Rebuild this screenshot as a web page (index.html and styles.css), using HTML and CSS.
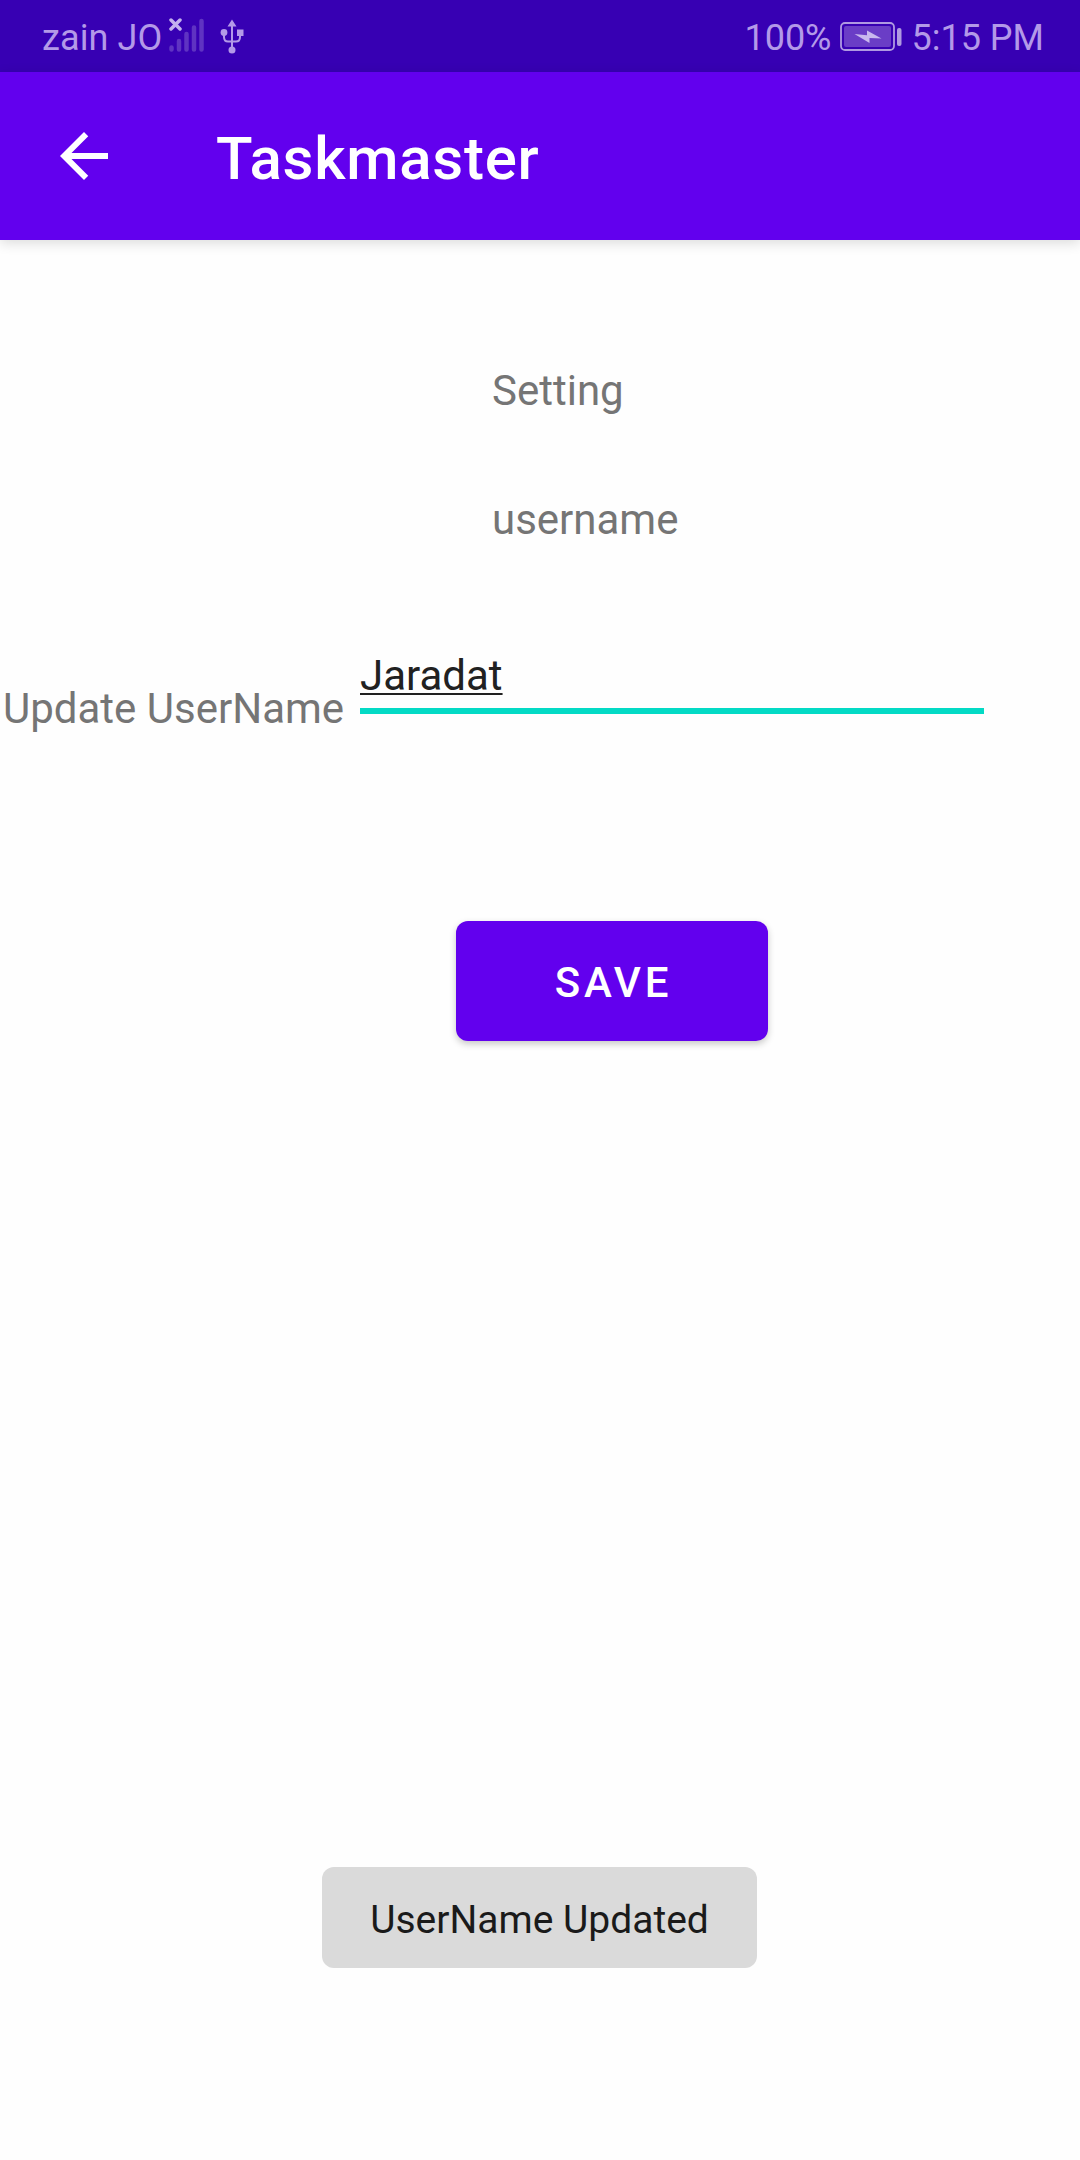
FILE: index.html
```
<!DOCTYPE html>
<html lang="en">
<head>
<meta charset="utf-8">
<title>Taskmaster</title>
<link rel="stylesheet" href="styles.css">
</head>
<body>
<header class="status-bar">
  <div class="status-group">
    <span class="carrier">zain JO</span>
    <svg class="signal" width="36" height="36" viewBox="0 0 36 36">
      <path class="signal-bars" d="M3.500 29.500v2M11 23v8.500M18.500 16v15.500M26 9.500v22M33.500 3v28.500"/>
      <path class="signal-x" d="M3 2l9 9M12 2l-9 9"/>
    </svg>
    <svg class="usb" width="24" height="36" viewBox="0 0 24 36">
      <path class="usb-line" d="M12 6v25M4 13v5q0 4.500 4 4.500h8q4 0 4-4.500v-5"/>
      <path class="usb-shape" d="M12 0.500l4.500 7h-9zM17 10.500h6.500v6.500h-6.500z"/>
      <circle class="usb-shape" cx="4" cy="13.500" r="3.400"/>
      <circle class="usb-shape" cx="12" cy="31" r="3.500"/>
    </svg>
  </div>
  <div class="status-group">
    <span class="percent">100%</span>
    <svg class="battery" width="62" height="30" viewBox="0 0 62 30">
      <rect class="battery-case" x="1" y="1" width="53" height="27" rx="4"/>
      <rect class="battery-fill" x="4" y="4" width="47" height="21" rx="2"/>
      <rect class="battery-cap" x="57" y="6" width="4.500" height="18" rx="2"/>
      <path class="battery-bolt" d="M14.500 12l12.500 1.200V8.500L41.500 16.500 29.500 16v5z"/>
    </svg>
    <span class="clock">5:15 PM</span>
  </div>
</header>
<nav class="app-bar">
  <svg class="back" width="72" height="72" viewBox="0 0 24 24"><path d="M20 11H7.830l5.590-5.590L12 4l-8 8 8 8 1.410-1.410L7.830 13H20z"/></svg>
  <h1 class="title">Taskmaster</h1>
</nav>
<main class="content">
  <div class="label heading">Setting</div>
  <div class="label username">username</div>
  <div class="field-row">
    <div class="label field-label">Update UserName</div>
    <div class="field"><span class="field-value">Jaradat</span></div>
  </div>
  <button class="save">Save</button>
  <div class="toast">UserName Updated</div>
</main>
</body>
</html>
```
FILE: styles.css
```
body {
  margin: 0;
  background: #fefefe;
  font-family: Roboto, sans-serif;
  font-size: 42px;
  line-height: 56px;
}

.status-bar {
  display: flex;
  justify-content: space-between;
  box-sizing: border-box;
  height: 72px;
  padding: 2px 36px 0 42px;
  background: #3700b3;
  color: #b399e8;
  font-size: 36px;
  line-height: 72px;
}

.status-group {
  display: flex;
  align-items: flex-start;
  white-space: nowrap;
}

.carrier {
  width: 125px;
  letter-spacing: 0.1px;
}

.signal {
  margin-top: 16px;
  margin-right: 16px;
  margin-left: 1px;
  fill: none;
  stroke-linecap: round;
}

.signal-bars {
  stroke: #5f33c2;
  stroke-width: 4.500;
}

.signal-x {
  stroke: #c3b0ee;
  stroke-width: 3.500;
}

.usb {
  margin-top: 17px;
}

.usb-line {
  fill: none;
  stroke: #b399e8;
  stroke-width: 2;
}

.usb-shape {
  fill: #b399e8;
}

.battery {
  margin: 20px 10px 0 8px;
}

.battery-case {
  fill: none;
  stroke: #af99e1;
  stroke-width: 1.800;
}

.battery-fill {
  fill: #6a3dc6;
}

.battery-cap {
  fill: #af99e1;
}

.battery-bolt {
  fill: #c9b8ee;
}

.app-bar {
  display: flex;
  align-items: center;
  position: relative;
  box-sizing: border-box;
  height: 168px;
  padding-left: 48px;
  background: #6200ee;
  color: #fff;
  box-shadow: 0 3px 12px rgba(0, 0, 0, 0.14);
}

.back {
  fill: #fff;
}

.title {
  margin: 0 0 0 96px;
  padding-top: 6px;
  font-size: 60px;
  font-weight: 500;
  line-height: 80px;
  letter-spacing: 0.0125em;
}

.content {
  display: flex;
  flex-direction: column;
  height: 1920px;
}

.label {
  color: #757575;
  white-space: nowrap;
}

.heading {
  margin: 123px 0 0 492px;
}

.username {
  margin: 73px 0 0 492px;
}

.field-row {
  display: flex;
  align-items: flex-start;
  margin-top: 100px;
}

.field-label {
  width: 357px;
  padding: 33px 0 0 3px;
  box-sizing: border-box;
}

.field {
  width: 624px;
  margin-left: 3px;
  padding-bottom: 4px;
  border-bottom: 6px solid #03dac5;
  color: #212121;
}

.field-value {
  text-decoration: underline;
  text-decoration-thickness: 2px;
  text-decoration-skip-ink: none;
  text-underline-offset: 3px;
}

.save {
  width: 312px;
  height: 120px;
  margin: 184px 0 0 456px;
  padding: 3px 0 0 3px;
  border: 0;
  border-radius: 12px;
  background: #6200ee;
  color: #fff;
  font: 500 42px/56px Roboto, sans-serif;
  letter-spacing: 0.0893em;
  text-transform: uppercase;
  box-shadow: 0 3px 7px rgba(0, 0, 0, 0.22);
}

.toast {
  box-sizing: border-box;
  width: 435px;
  height: 101px;
  margin: 826px 0 0 322px;
  padding-top: 3px;
  border-radius: 12px;
  background: #dadada;
  color: #1a1a1a;
  font-size: 39px;
  line-height: 100px;
  text-align: center;
}
```
